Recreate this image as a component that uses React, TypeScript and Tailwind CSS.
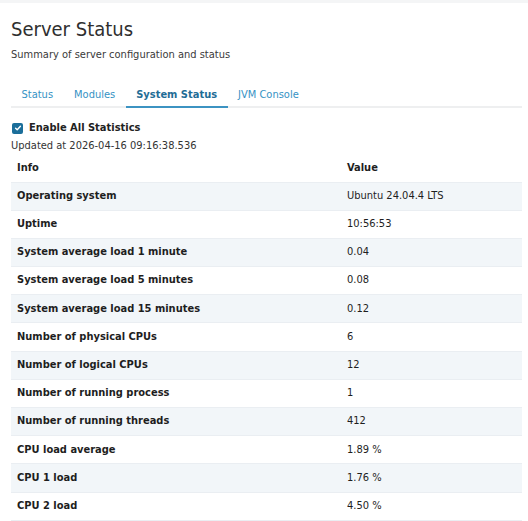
import React from 'react';

const rows: [string, string][] = [
  ['Operating system', 'Ubuntu 24.04.4 LTS'],
  ['Uptime', '10:56:53'],
  ['System average load 1 minute', '0.04'],
  ['System average load 5 minutes', '0.08'],
  ['System average load 15 minutes', '0.12'],
  ['Number of physical CPUs', '6'],
  ['Number of logical CPUs', '12'],
  ['Number of running process', '1'],
  ['Number of running threads', '412'],
  ['CPU load average', '1.89 %'],
  ['CPU 1 load', '1.76 %'],
  ['CPU 2 load', '4.50 %'],
  ['', ''],
];

const tabs = ['Status', 'Modules', 'System Status', 'JVM Console'];

export default function App() {
  return (
    <div
      className="min-h-screen bg-white overflow-hidden"
      style={{ fontFamily: 'Tahoma, "DejaVu Sans Condensed", "Liberation Sans", sans-serif' }}
    >
      <div className="h-[3px] bg-[#f4f5f6]" />
      <div className="pl-[11px] pr-[6px]">
        {/* Header */}
        <h1 className="mt-[14px] text-[20px] leading-[24px] text-[#2f2f2f]">Server Status</h1>
        <p className="mt-[7px] text-[11px] leading-[14px] text-[#3a3a3a]">
          Summary of server configuration and status
        </p>

        {/* Tabs */}
        <div className="mt-[26px] flex border-b-2 border-[#eeeff0]">
          {tabs.map((t) => {
            const active = t === 'System Status';
            return (
              <div
                key={t}
                className={
                  active
                    ? 'px-[10.5px] pb-[4px] text-[11px] leading-[14px] font-bold text-[#1f6d96] border-b-2 border-[#3c93c2] -mb-[2px]'
                    : 'px-[10.5px] pb-[4px] text-[11px] leading-[14px] text-[#3592c4]'
                }
              >
                {t}
              </div>
            );
          })}
        </div>

        {/* Options */}
        <div className="mt-[13px] flex items-center gap-[6px] pl-[1px]">
          <span className="flex h-[11px] w-[11px] items-center justify-center rounded-[2px] bg-[#1b6e9a]">
            <svg width="8" height="8" viewBox="0 0 10 10" fill="none">
              <path d="M2 5.2l2 2 4-4.4" stroke="white" strokeWidth="1.8" strokeLinecap="round" strokeLinejoin="round" />
            </svg>
          </span>
          <span className="text-[11px] leading-[14px] font-bold text-[#222]">Enable All Statistics</span>
        </div>
        <div className="mt-[4px] text-[11px] leading-[14px] text-[#333]">Updated at 2026-04-16 09:16:38.536</div>

        {/* Table */}
        <table className="mt-[1px] w-[511px] border-collapse text-[11px] text-[#1e1e1e]">
          <thead>
            <tr className="h-[28px]">
              <th className="w-[330px] px-[6px] text-left font-bold">Info</th>
              <th className="px-[6px] text-left font-bold">Value</th>
            </tr>
          </thead>
          <tbody>
            {rows.map(([k, v], i) => (
              <tr key={i} className={i % 2 === 0 ? 'h-[28.2px] bg-[#f2f6f9] border-y border-[#eaeef2]' : 'h-[28.2px] bg-white'}>
                <td className="px-[6px] font-bold">{k}</td>
                <td className="px-[6px]">{v}</td>
              </tr>
            ))}
          </tbody>
        </table>
      </div>
    </div>
  );
}
